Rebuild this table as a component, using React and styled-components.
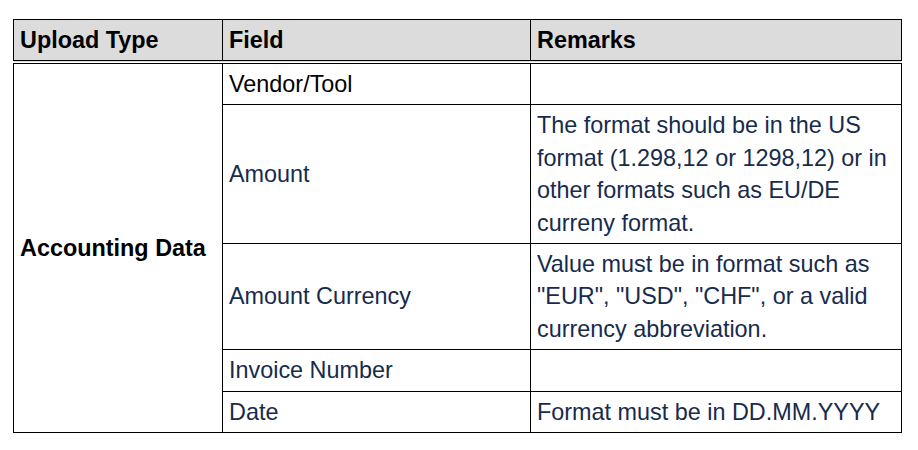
import React from "react";
import styled, { createGlobalStyle } from "styled-components";

const GlobalStyle = createGlobalStyle`
  body {
    margin: 0;
    background: #fff;
    font-family: "Liberation Sans", Arial, sans-serif;
  }
`;

const Page = styled.div`
  padding: 19px 0 0 13px;
`;

const Table = styled.table`
  border-collapse: collapse;
  width: 888px;
  table-layout: fixed;
  font-size: 23.4px;
  line-height: 32.4px;
`;

const HeadCell = styled.th`
  background: #dcdcdc;
  border: 1px solid #000;
  border-bottom: 4px double #000;
  padding: 4px 6px;
  text-align: left;
  font-weight: 700;
  color: #000;
  line-height: 32px;
`;

const Cell = styled.td`
  border: 1px solid #000;
  padding: 4px 6px;
  vertical-align: middle;
  color: ${(p) => (p.$dark ? "#000" : "#172b4d")};
  font-weight: ${(p) => (p.$bold ? 700 : 400)};
`;

const rows = [
  { field: "Vendor/Tool", remarks: "", dark: true },
  {
    field: "Amount",
    remarks:
      "The format should be in the US format (1.298,12 or 1298,12) or in other formats such as EU/DE curreny format.",
  },
  {
    field: "Amount Currency",
    remarks:
      'Value must be in format such as "EUR", "USD", "CHF", or a valid currency abbreviation.',
  },
  { field: "Invoice Number", remarks: "" },
  { field: "Date", remarks: "Format must be in DD.MM.YYYY" },
];

export default function App() {
  return (
    <Page>
      <GlobalStyle />
      <Table>
        <colgroup>
          <col style={{ width: 209 }} />
          <col style={{ width: 308 }} />
          <col style={{ width: 371 }} />
        </colgroup>
        <thead>
          <tr>
            <HeadCell>Upload Type</HeadCell>
            <HeadCell>Field</HeadCell>
            <HeadCell>Remarks</HeadCell>
          </tr>
        </thead>
        <tbody>
          {rows.map((r, i) => (
            <tr key={r.field}>
              {i === 0 && (
                <Cell rowSpan={rows.length} $dark $bold>
                  Accounting Data
                </Cell>
              )}
              <Cell $dark={r.dark}>{r.field}</Cell>
              <Cell>{r.remarks}</Cell>
            </tr>
          ))}
        </tbody>
      </Table>
    </Page>
  );
}
